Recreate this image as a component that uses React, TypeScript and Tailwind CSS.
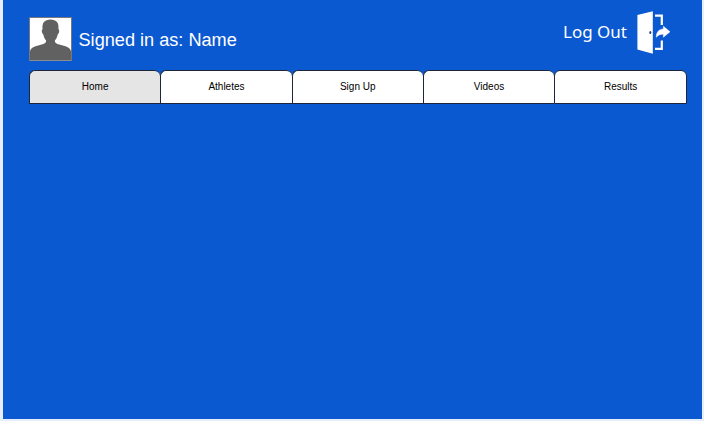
const tabs = ["Home", "Athletes", "Sign Up", "Videos", "Results"];

function Avatar() {
  return (
    <svg className="block h-[44px] w-[43px] shrink-0" viewBox="0 0 43 44" role="img" aria-label="Profile">
      <rect x="0.5" y="0.5" width="42" height="43.5" fill="#fff" stroke="#77777f" />
      <path
        fill="#616161"
        d="M1 43.5V34.5C1.5 30.5 6 29.3 11 28C15.5 26.8 17.3 26 17.1 23.5C15.7 22 14.9 20 14.3 17.5C13.3 16.8 12.8 15.2 12.8 13.6C12.8 12.8 13.1 12.4 13.6 12.2C12.8 6 15.6 2.6 21.5 2.6C27.4 2.6 30.2 6 29.4 12.2C29.9 12.4 30.2 12.8 30.2 13.6C30.2 15.2 29.7 16.8 28.7 17.5C28.1 20 27.3 22 25.9 23.5C25.7 26 27.5 26.8 32 28C37 29.3 41.5 30.5 42 34.5V43.5Z"
      />
    </svg>
  );
}

function DoorIcon() {
  return (
    <svg className="block h-[44px] w-[34px] shrink-0" viewBox="0 0 34 44" aria-hidden="true">
      <path d="M0.4 4L15.8 0.3V42.7L0.4 38.5Z" fill="#fff" />
      <ellipse cx="13.3" cy="21.5" rx="1" ry="1.5" fill="#173f86" />
      <path d="M18 4.7H24.8V14M24.8 29.5V37.8H18" fill="none" stroke="#fff" strokeWidth="2.2" />
      <path d="M19.3 26.2C19.2 21 22.2 18.1 26.4 17.9V15.3L33 20.8L26.4 26.2V23.2C23.6 23 21.2 23.8 19.3 26.2Z" fill="#fff" stroke="#fff" strokeWidth="0.5" strokeLinejoin="round" />
    </svg>
  );
}

export default function App() {
  return (
    <div className="h-[421px] w-[704px] bg-[#e5eefa] pl-[3px] pr-[2px] pb-[2px]">
      <main className="flex h-full flex-col bg-[#0b59d1] pl-[26px] pr-[15px] font-['Liberation_Sans',Arial,sans-serif]">
        <header className="flex h-[70px] shrink-0 items-start justify-between">
          <div className="flex pt-[17px]">
            <Avatar />
            <h1 className="ml-[6.5px] pt-[10px] text-[18.15px] leading-[26px] whitespace-nowrap text-white">
              Signed in as: Name
            </h1>
          </div>
          <button type="button" className="mr-[16px] flex pt-[11px] text-white">
            <span className="mr-[10px] pt-[9px] font-['Noto_Sans','Open_Sans',sans-serif] text-[17px] leading-[24px] whitespace-nowrap">
              Log Out
            </span>
            <DoorIcon />
          </button>
        </header>
        <nav className="flex h-[34px] w-[658px]">
          {tabs.map((tab, i) => (
            <a
              key={tab}
              className={`flex items-center justify-center rounded-t-[6px] border-[#1c2638] border-t border-b border-l text-[10px] leading-none text-black ${i === 0 ? "bg-[#e5e5e5]" : "bg-white"} ${i === tabs.length - 1 ? "w-[132.8px] border-r" : "w-[131.3px]"}`}
            >
              {tab}
            </a>
          ))}
        </nav>
      </main>
    </div>
  );
}
